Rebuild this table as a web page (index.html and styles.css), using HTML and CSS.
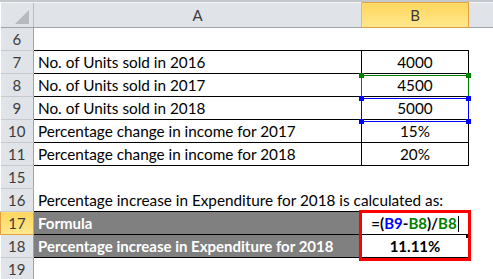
FILE: index.html
```html
<!DOCTYPE html>
<html>
<head>
<meta charset="utf-8">
<link rel="stylesheet" href="styles.css">
</head>
<body>
<div class="sheet">
  <table class="grid">
    <colgroup>
      <col class="c-rh">
      <col class="c-a">
      <col class="c-b">
      <col class="c-rest">
    </colgroup>
    <thead>
      <tr class="hdr">
        <th class="corner"><span class="tri"></span></th>
        <th class="colh">A</th>
        <th class="colh sel">B</th>
        <th class="colh rest"></th>
      </tr>
    </thead>
    <tbody>
      <tr><th class="rh">6</th><td></td><td></td><td></td></tr>
      <tr class="bd"><th class="rh">7</th><td class="b">No. of Units sold in 2016</td><td class="b num">4000</td><td></td></tr>
      <tr class="bd"><th class="rh">8</th><td class="b">No. of Units sold in 2017</td><td class="b num">4500</td><td></td></tr>
      <tr class="bd"><th class="rh">9</th><td class="b">No. of Units sold in 2018</td><td class="b num">5000</td><td></td></tr>
      <tr class="bd"><th class="rh">10</th><td class="b">Percentage change in income for 2017</td><td class="b num">15%</td><td></td></tr>
      <tr class="bd"><th class="rh">11</th><td class="b">Percentage change in income for 2018</td><td class="b num">20%</td><td></td></tr>
      <tr><th class="rh">15</th><td></td><td></td><td></td></tr>
      <tr><th class="rh">16</th><td class="over">Percentage increase in Expenditure for 2018 is calculated as:</td><td></td><td></td></tr>
      <tr><th class="rh sel">17</th><td class="b dark">Formula</td><td class="b num strong formula"><span class="k">=(</span><span class="r1">B9</span><span class="k">-</span><span class="r2">B8</span><span class="k">)/</span><span class="r2">B8</span><span class="caret"></span></td><td></td></tr>
      <tr><th class="rh">18</th><td class="b dark">Percentage increase in Expenditure for 2018</td><td class="b num strong">11.11%</td><td></td></tr>
      <tr><th class="rh">19</th><td></td><td></td><td></td></tr>
    </tbody>
  </table>
  <div class="selbox green"><i class="h tl"></i><i class="h tr"></i></div>
  <div class="selbox blue"><i class="h tl"></i><i class="h tr"></i><i class="h bl"></i><i class="h br"></i></div>
  <div class="fill-handle"></div>
  <div class="redbox"></div>
</div>
</body>
</html>
```

FILE: styles.css
```css
* { box-sizing: border-box; }
html, body { margin: 0; padding: 0; background: #ffffff; }
body { font-family: "Lato", "Liberation Sans", sans-serif; font-size: 15px; color: #000; overflow: hidden; }

.sheet {
  position: relative;
  width: 493px;
  height: 279px;
  border-top: 2px solid #c4c8cd;
  box-shadow: inset 0 1px 0 #f4f4f4;
}

.grid {
  border-collapse: collapse;
  table-layout: fixed;
  width: 493px;
}
.c-rh { width: 33px; }
.c-a { width: 328px; }
.c-b { width: 107px; }
.c-rest { width: 25px; }

.hdr th {
  height: 25px;
  background: #e0e3e8;
  font-weight: normal;
  color: #3c3c3c;
  border-right: 1px solid #b9bdc2;
  border-bottom: 1px solid #9ea3a9;
  padding: 0;
  text-align: center;
  vertical-align: middle;
}
.hdr th.rest { border-right: none; }
.hdr th.sel, .rh.sel {
  background: linear-gradient(#ffd65d, #ffe88e);
  border: 1px solid #e0a142;
}
.corner { position: relative; }
.tri {
  position: absolute;
  right: 4px;
  bottom: 3px;
  width: 0; height: 0;
  border-left: 14px solid transparent;
  border-bottom: 14px solid #b6babf;
}

tbody tr { height: 23px; }
td {
  padding: 0 4px;
  white-space: nowrap;
  overflow: visible;
  vertical-align: middle;
  font-size: 15.3px;
}
.rh {
  background: #e0e3e8;
  font-weight: normal;
  color: #3c3c3c;
  text-align: center;
  padding: 0;
  border-right: 1px solid #9ea3a9;
  border-bottom: 1px solid #c6cace;
}
td.b { border: 1px solid #000; }
.num { text-align: center; }
.strong { font-weight: bold; font-size: 15px; }
.dark { background: #808080; color: #ffffff; font-weight: bold; font-size: 15px; }
.over { overflow: visible; }

.formula { position: relative; }
.k { color: #000; }
.r1 { color: #0000ff; }
.r2 { color: #008000; }
.caret {
  display: inline-block;
  width: 1px;
  height: 16px;
  background: #000;
  vertical-align: -3px;
  margin-left: 1px;
}

.selbox { position: absolute; border: 1px solid; }
.selbox.green { left: 361px; top: 73px; width: 108px; height: 24px; border-color: #008000; }
.selbox.blue { left: 361px; top: 96px; width: 108px; height: 24px; border-color: #0000ff; }
.h { position: absolute; width: 5px; height: 5px; }
.green .h { background: #008000; }
.blue .h { background: #0000ff; }
.h.tl { left: -3px; top: -3px; }
.h.tr { right: -3px; top: -3px; }
.h.bl { left: -3px; bottom: -3px; }
.h.br { right: -3px; bottom: -3px; }

.fill-handle {
  position: absolute;
  left: 466px; top: 233px;
  width: 3px; height: 3px;
  background: #000;
}
.redbox {
  position: absolute;
  left: 359px; top: 208px;
  width: 112px; height: 51px;
  border: 3px solid #ff0000;
}
```
